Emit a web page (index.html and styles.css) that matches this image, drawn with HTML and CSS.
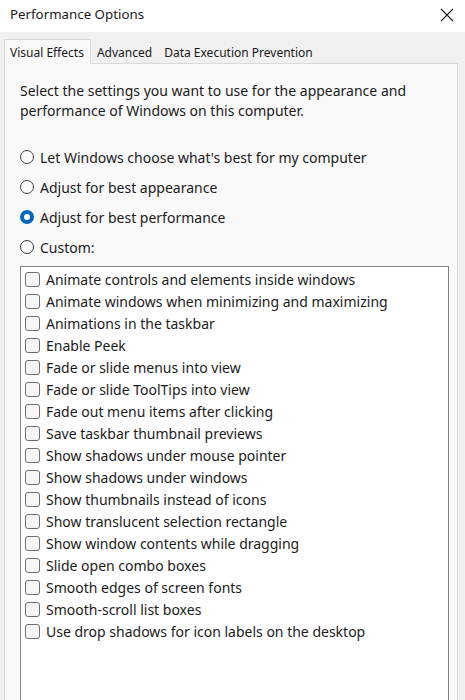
FILE: index.html
```html
<!DOCTYPE html>
<html lang="en">
<head>
<meta charset="utf-8">
<title>Performance Options</title>
<link rel="stylesheet" href="styles.css">
</head>
<body>
<div class="window">
  <div class="titlebar">
    <span class="title">Performance Options</span>
    <svg class="close" width="14" height="14" viewBox="0 0 14 14"><path d="M1 1 L13 13 M13 1 L1 13" stroke="#1a1a1a" stroke-width="1.1" fill="none"/></svg>
  </div>
  <div class="body">
    <div class="tabs">
      <div class="tab active">Visual Effects</div>
      <div class="tab">Advanced</div>
      <div class="tab">Data Execution Prevention</div>
    </div>
    <div class="panel">
      <p class="intro">Select the settings you want to use for the appearance and performance of Windows on this computer.</p>
      <div class="radios">
        <div class="radio"><span class="dot"></span>Let Windows choose what's best for my computer</div>
        <div class="radio"><span class="dot"></span>Adjust for best appearance</div>
        <div class="radio"><span class="dot on"></span>Adjust for best performance</div>
        <div class="radio"><span class="dot"></span>Custom:</div>
      </div>
      <div class="list">
        <div class="item"><span class="box"></span>Animate controls and elements inside windows</div>
        <div class="item"><span class="box"></span>Animate windows when minimizing and maximizing</div>
        <div class="item"><span class="box"></span>Animations in the taskbar</div>
        <div class="item"><span class="box"></span>Enable Peek</div>
        <div class="item"><span class="box"></span>Fade or slide menus into view</div>
        <div class="item"><span class="box"></span>Fade or slide ToolTips into view</div>
        <div class="item"><span class="box"></span>Fade out menu items after clicking</div>
        <div class="item"><span class="box"></span>Save taskbar thumbnail previews</div>
        <div class="item"><span class="box"></span>Show shadows under mouse pointer</div>
        <div class="item"><span class="box"></span>Show shadows under windows</div>
        <div class="item"><span class="box"></span>Show thumbnails instead of icons</div>
        <div class="item"><span class="box"></span>Show translucent selection rectangle</div>
        <div class="item"><span class="box"></span>Show window contents while dragging</div>
        <div class="item"><span class="box"></span>Slide open combo boxes</div>
        <div class="item"><span class="box"></span>Smooth edges of screen fonts</div>
        <div class="item"><span class="box"></span>Smooth-scroll list boxes</div>
        <div class="item"><span class="box"></span>Use drop shadows for icon labels on the desktop</div>
      </div>
    </div>
  </div>
</div>
</body>
</html>
```
FILE: styles.css
```css
html, body {
  margin: 0;
  padding: 0;
  height: 100%;
  overflow: hidden;
}
body {
  font-family: "Noto Sans", "Open Sans", sans-serif;
  color: #1b1b1b;
  background: #f0f0f0;
}
.window {
  height: 700px;
  display: flex;
  flex-direction: column;
  overflow: hidden;
}
.titlebar {
  height: 32px;
  flex: none;
  background: #ffffff;
  display: flex;
  align-items: center;
  justify-content: space-between;
  padding: 0 11px 0 10px;
  box-sizing: border-box;
}
.title {
  font-size: 13.3px;
  color: #1a1a1a;
  margin-top: -4px;
}
.close {
  margin-top: -3px;
}
.body {
  flex: none;
  background: #f0f0f0;
  padding: 6px 7px 0 4px;
  display: flex;
  flex-direction: column;
}
.tabs {
  display: flex;
  align-items: flex-end;
  height: 25px;
  flex: none;
}
.tab {
  font-size: 12px;
  color: #1a1a1a;
  padding: 2px 6px 3px 6px;
  height: 20px;
  box-sizing: border-box;
  line-height: 16px;
}
.tab.active {
  background: #f9f9f9;
  border: 1px solid #dadada;
  border-bottom: none;
  height: 25px;
  padding: 4px 6px 0 5px;
  line-height: 18px;
  position: relative;
  top: 1px;
}
.panel {
  background: #f9f9f9;
  border: 1px solid #dadada;
  border-bottom: none;
  padding: 17px 8px 0 15px;
  height: 700px;
  box-sizing: border-box;
}
.intro {
  margin: 0;
  font-size: 14px;
  line-height: 20px;
  color: #1b1b1b;
}
.radios {
  margin-top: 21px;
  display: flex;
  flex-direction: column;
}
.radio {
  display: flex;
  align-items: center;
  height: 30px;
  font-size: 14px;
}
.dot {
  width: 12px;
  height: 12px;
  border: 1px solid #3a3a3a;
  border-radius: 50%;
  background: #fdfdfd;
  margin-right: 6px;
  flex: none;
}
.dot.on {
  width: 6px;
  height: 6px;
  border: 4px solid #0067c0;
  background: #ffffff;
}
.list {
  margin-top: 4px;
  background: #ffffff;
  border: 1px solid #828282;
  border-bottom: none;
  height: 500px;
  padding: 1px 0 0 4px;
}
.item {
  display: flex;
  align-items: center;
  height: 22px;
  font-size: 14px;
  color: #1b1b1b;
}
.box {
  width: 13px;
  height: 13px;
  border: 1px solid #6e6e6e;
  border-radius: 3px;
  background: #f6f6f6;
  margin-right: 6px;
  flex: none;
}
```
